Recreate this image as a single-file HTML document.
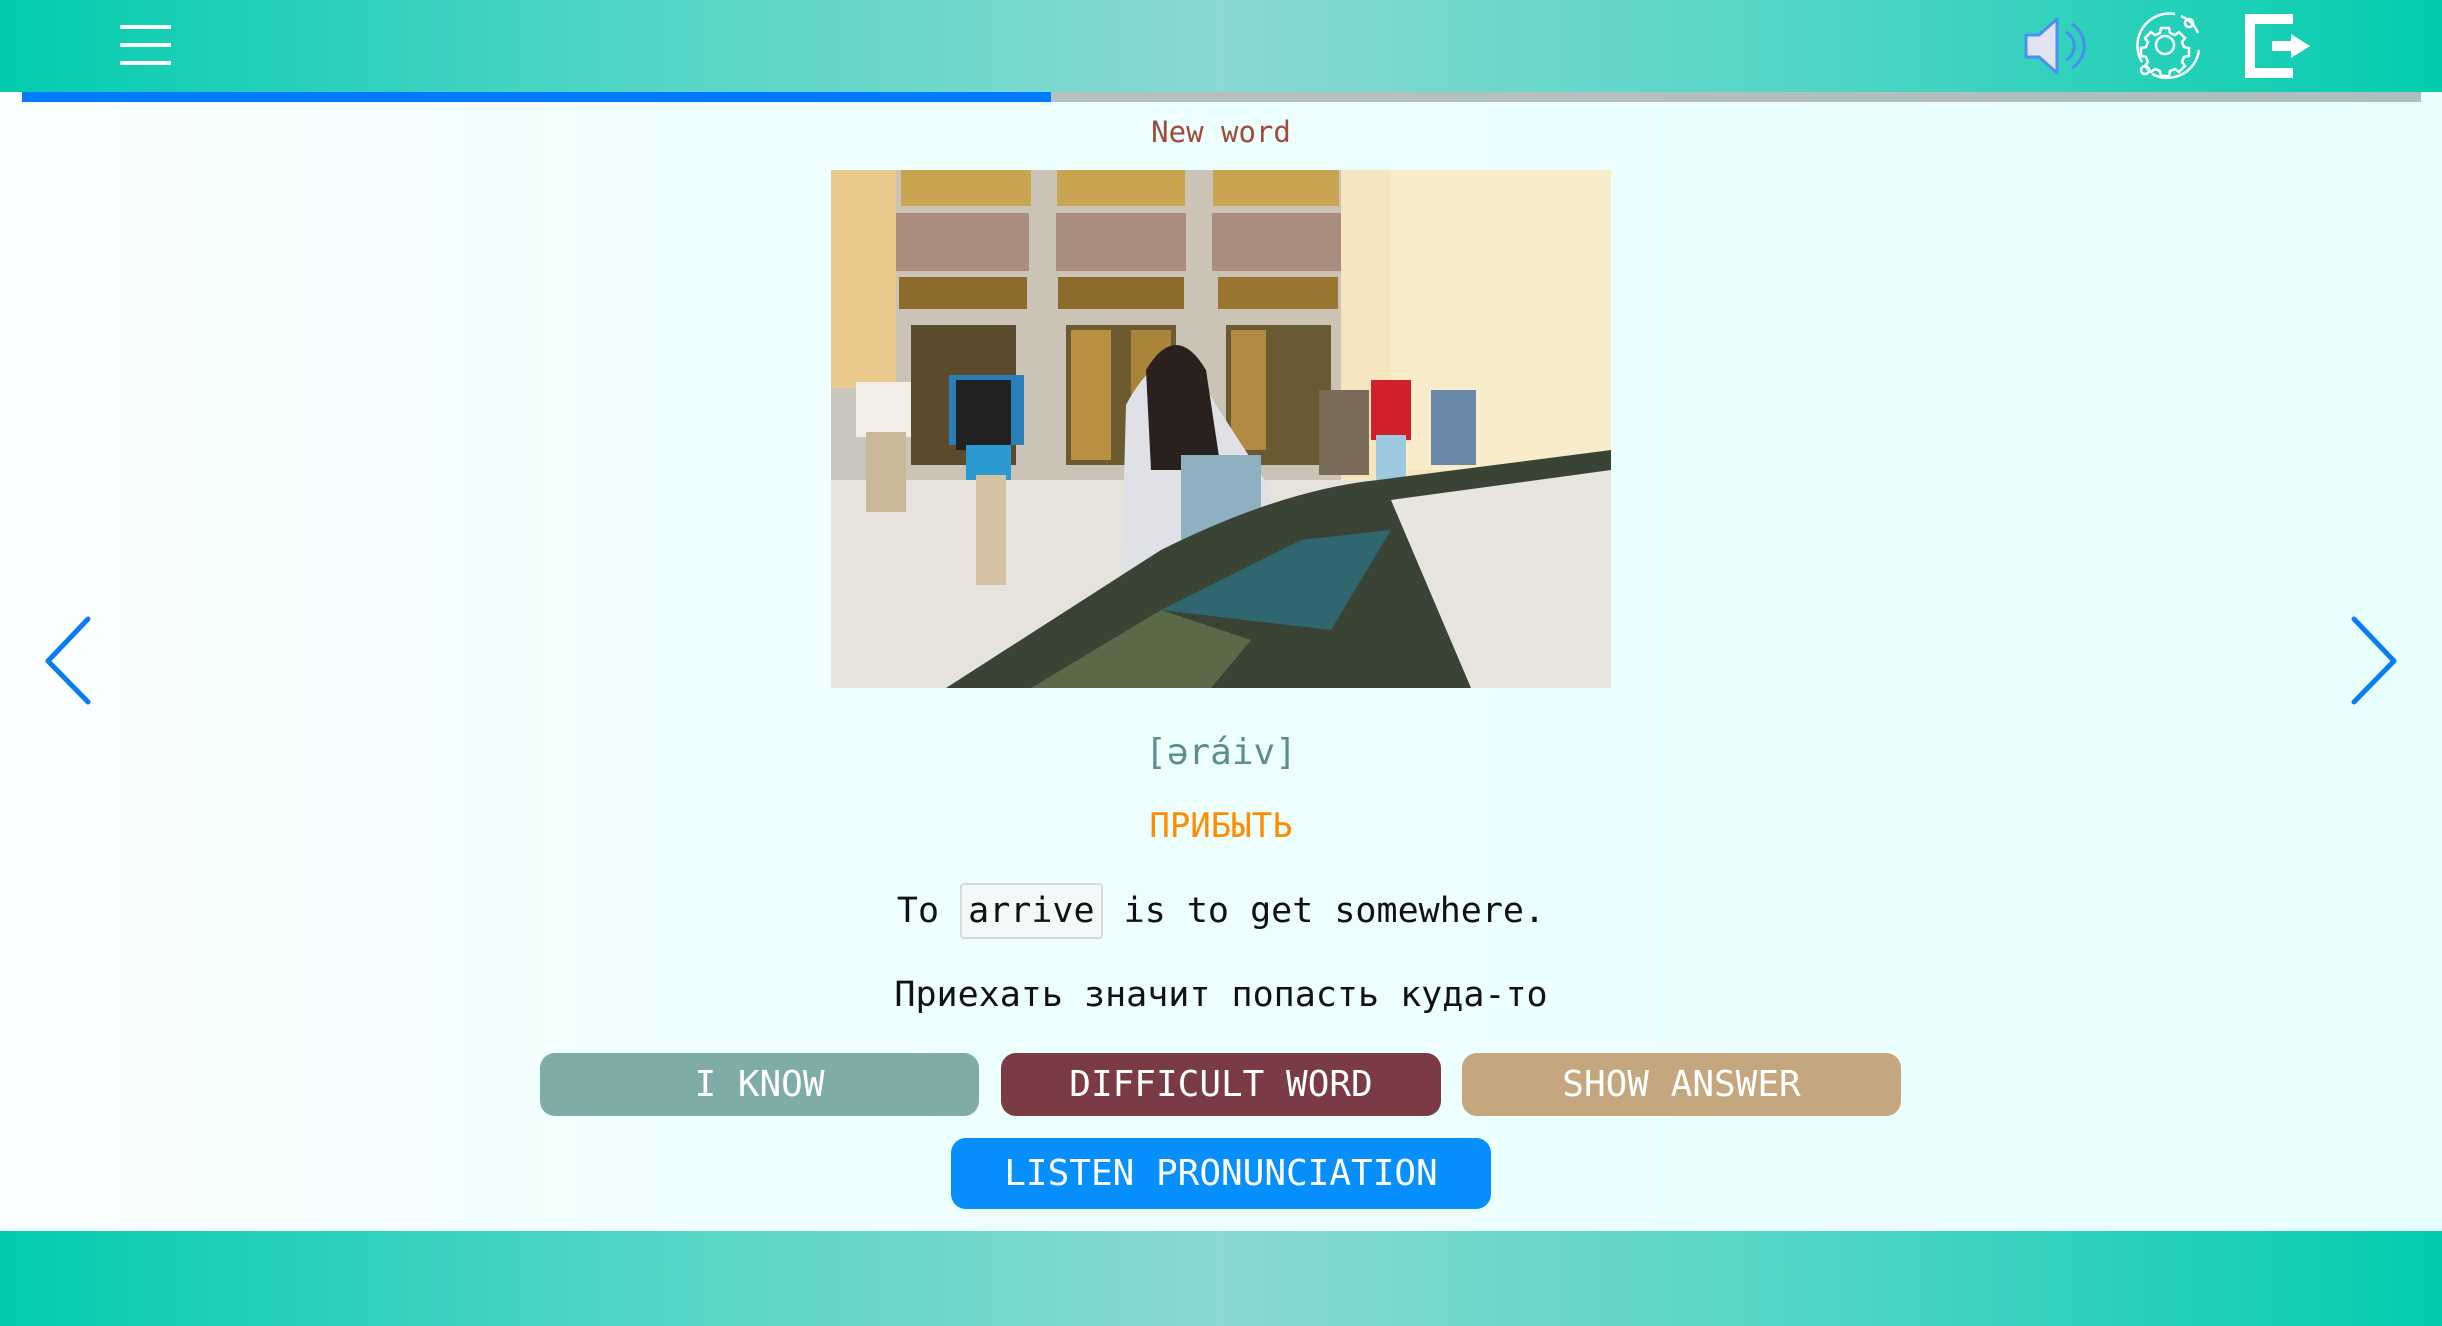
<!DOCTYPE html>
<html><head><meta charset="utf-8"><style>
*{margin:0;padding:0;box-sizing:border-box}
body{width:2442px;height:1326px;overflow:hidden;position:relative;font-family:"DejaVu Sans Mono","Liberation Mono",monospace;background:linear-gradient(90deg,#fbfefe 0%,#eefffd 30%,#e8fffd 100%)}
.hdr{position:absolute;left:0;top:0;width:2442px;height:92px;background:linear-gradient(90deg,#02ccae 0%,#4fd5c4 25%,#8ad9d2 50%,#4fd5c4 75%,#02ccae 100%)}
.ftr{position:absolute;left:0;top:1231px;width:2442px;height:95px;background:linear-gradient(90deg,#02ccae 0%,#4fd5c4 25%,#8ad9d2 50%,#4fd5c4 75%,#02ccae 100%)}
.bar{position:absolute;left:22px;top:92px;height:10px}
.hb{position:absolute;left:120px;width:51px;height:4px;background:#fff}
.t{position:absolute;left:0;width:2442px;text-align:center;white-space:pre}
.btn{position:absolute;top:1053px;height:63px;border-radius:15px;color:#fff;font-size:36px;line-height:63px;text-align:center;letter-spacing:0px}
</style></head><body>
<div class="hdr"></div>
<div class="hb" style="top:25px"></div><div class="hb" style="top:43px"></div><div class="hb" style="top:61px"></div>
<svg style="position:absolute;left:2000px;top:0" width="330" height="92" viewBox="0 0 330 92">
<path d="M26 35 H39 L57 19 V73 L39 57 H26 Z" fill="#e1e4f0" stroke="#4c8cf5" stroke-width="3" stroke-linejoin="round"/>
<path d="M66 32 A16 16 0 0 1 66 60" fill="none" stroke="#4c8cf5" stroke-width="3"/>
<path d="M72 24 A26 26 0 0 1 72 68" fill="none" stroke="#4c8cf5" stroke-width="3"/>
<g fill="none" stroke="#fff" stroke-width="2.5">
<path d="M181 16 A32 32 0 0 1 198 33"/><path d="M199 50 A32 32 0 0 1 152 74"/><path d="M142 62 A32 32 0 0 1 175 14"/>
<circle cx="189" cy="23" r="4"/><circle cx="145" cy="70" r="4"/>
<circle cx="165" cy="45" r="9"/>
<path d="M161 28 h8 l1 5 5 2 4-3 6 6-3 4 2 5 5 1 v8 l-5 1-2 5 3 4-6 6-4-3-5 2-1 5 h-8 l-1-5-5-2-4 3-6-6 3-4-2-5-5-1 v-8 l5-1 2-5-3-4 6-6 4 3 5-2 z"/>
</g>
<path d="M245 14 H293 V24 H255 V68 H293 V78 H245 Z" fill="#fff"/>
<path d="M272 41 H291 V34 L310 46 L291 58 V51 H272 Z" fill="#fff"/>
</svg>
<div class="bar" style="width:1029px;background:#007bff"></div>
<div class="bar" style="left:1051px;width:1370px;background:linear-gradient(90deg,#b5c0c0,#adbfbd)"></div>
<div class="t" style="top:115px;font-size:29px;color:#a04a3e">New word</div>
<svg style="position:absolute;left:831px;top:170px" width="780" height="518" viewBox="0 0 780 518">
<rect width="780" height="518" fill="#f5e6bf"/>
<rect x="560" width="220" height="300" fill="#f8ecca"/>
<rect width="65" height="220" fill="#e9c98c"/>
<rect x="0" y="218" width="65" height="125" fill="#c9c6bd"/>
<rect x="65" y="0" width="445" height="310" fill="#cbc4b6"/>
<rect x="70" y="0" width="130" height="36" fill="#c9a451"/><rect x="226" y="0" width="128" height="36" fill="#c9a451"/><rect x="382" y="0" width="126" height="36" fill="#c9a451"/>
<rect x="65" y="43" width="133" height="58" fill="#a98e80"/><rect x="225" y="43" width="130" height="58" fill="#a98e80"/><rect x="381" y="43" width="129" height="58" fill="#a98e80"/>
<rect x="68" y="107" width="128" height="32" fill="#8e6c2c"/><rect x="227" y="107" width="126" height="32" fill="#8e6c2c"/><rect x="387" y="107" width="120" height="32" fill="#9a7630"/>
<rect x="80" y="155" width="105" height="140" fill="#5b4a2c"/><rect x="235" y="155" width="110" height="140" fill="#6e5a30"/><rect x="395" y="155" width="105" height="140" fill="#6a5a34"/>
<rect x="240" y="160" width="40" height="130" fill="#b89040"/><rect x="300" y="160" width="40" height="130" fill="#a88438"/><rect x="400" y="160" width="35" height="120" fill="#b08a40"/>
<rect x="0" y="310" width="780" height="208" fill="#e6e2dc"/>
<rect x="25" y="212" width="55" height="55" fill="#f2efe8"/><rect x="35" y="262" width="40" height="80" fill="#c8b898"/>
<rect x="118" y="205" width="75" height="70" fill="#2a7fb8"/><rect x="125" y="210" width="55" height="70" fill="#222"/><rect x="135" y="275" width="45" height="35" fill="#2b9ad0"/><rect x="145" y="305" width="30" height="110" fill="#d5c2a2"/>
<rect x="488" y="220" width="50" height="85" fill="#7a6a58"/><rect x="540" y="210" width="40" height="60" fill="#d0202a"/><rect x="545" y="265" width="30" height="45" fill="#9cc8e0"/>
<rect x="600" y="220" width="45" height="75" fill="#6a88a8"/>
<path d="M295 235 Q340 150 385 235 L440 320 L430 420 L290 420 Z" fill="#dfe1e6"/>
<path d="M315 200 Q345 150 375 200 L390 300 L320 300 Z" fill="#2a211f"/>
<rect x="350" y="285" width="80" height="110" fill="#8eb0c0"/>
<path d="M115 518 L330 380 Q450 320 547 310 L780 280 L780 518 Z" fill="#3a4434"/>
<path d="M560 330 L780 300 L780 518 L640 518 Z" fill="#e7e5de"/>
<path d="M330 440 L470 370 L560 360 L500 460 Z" fill="#2f6670"/>
<path d="M200 518 L330 440 L420 470 L380 518 Z" fill="#5a6a48"/>
</svg>
<svg style="position:absolute;left:0;top:600px" width="2442" height="120">
<path d="M88 19 L48 61 L88 102" fill="none" stroke="#0a7cf2" stroke-width="5" stroke-linecap="round" stroke-linejoin="round"/>
<path d="M2354 19 L2394 61 L2354 102" fill="none" stroke="#0a7cf2" stroke-width="5" stroke-linecap="round" stroke-linejoin="round"/>
</svg>
<div class="t" style="top:732px;font-size:36px;color:#5e8e8c">[əráiv]</div>
<div class="t" style="top:806px;font-size:34px;color:#ff8c00">ПРИБЫТЬ</div>
<div class="t" style="top:891px;font-size:35px;color:#111">To <span style="display:inline-block;border:2px solid #d4d8d8;background:#f4f8f8;border-radius:4px;padding:0 6px;line-height:52px;margin:-8px 0">arrive</span> is to get somewhere.</div>
<div class="t" style="top:975px;font-size:35px;color:#111">Приехать значит попасть куда-то</div>
<div class="btn" style="left:540px;width:439px;background:#80aca8">I KNOW</div>
<div class="btn" style="left:1001px;width:440px;background:#7a3b45">DIFFICULT WORD</div>
<div class="btn" style="left:1462px;width:439px;background:#c5a77f">SHOW ANSWER</div>
<div class="btn" style="left:951px;top:1138px;height:71px;line-height:71px;width:540px;background:#068ffd">LISTEN PRONUNCIATION</div>
<div class="ftr"></div>
</body></html>
